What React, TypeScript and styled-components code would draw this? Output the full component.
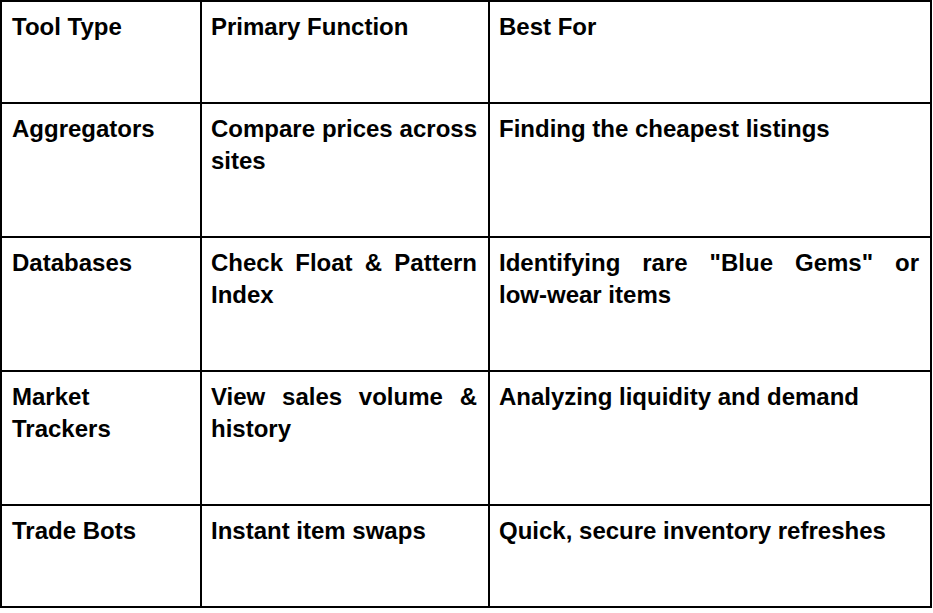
import React from "react";
import styled, { createGlobalStyle } from "styled-components";

const Global = createGlobalStyle`
  html, body { margin: 0; padding: 0; background: #fff; }
  body { font-family: "Liberation Sans", Arial, sans-serif; }
`;

const Table = styled.div`
  display: grid;
  grid-template-columns: 200px 288px 442px;
  width: 932px;
  box-sizing: border-box;
  border-top: 2px solid #000;
  border-left: 2px solid #000;
  font-family: "Liberation Sans", Arial, sans-serif;
`;

const Cell = styled.div<{ $justify?: boolean; $first?: boolean }>`
  border-right: 2px solid #000;
  border-bottom: 2px solid #000;
  padding: 9px 11px 59px ${(p) => (p.$first ? "10px" : "9px")};
  font-size: 24px;
  line-height: 32px;
  font-weight: 700;
  color: #000;
  text-align: ${(p) => (p.$justify ? "justify" : "left")};
`;

const NoWrap = styled.span`
  white-space: nowrap;
`;

const rows: [React.ReactNode, React.ReactNode, React.ReactNode][] = [
  ["Tool Type", "Primary Function", "Best For"],
  ["Aggregators", "Compare prices across sites", "Finding the cheapest listings"],
  [
    "Databases",
    "Check Float & Pattern Index",
    <>
      Identifying rare "Blue Gems" or <NoWrap>low-wear</NoWrap> items
    </>,
  ],
  ["Market Trackers", "View sales volume & history", "Analyzing liquidity and demand"],
  ["Trade Bots", "Instant item swaps", "Quick, secure inventory refreshes"],
];

export default function App() {
  return (
    <>
      <Global />
      <Table>
        {rows.map((r, i) => (
          <React.Fragment key={i}>
            <Cell $first>{r[0]}</Cell>
            <Cell $justify>{r[1]}</Cell>
            <Cell $justify>{r[2]}</Cell>
          </React.Fragment>
        ))}
      </Table>
    </>
  );
}
